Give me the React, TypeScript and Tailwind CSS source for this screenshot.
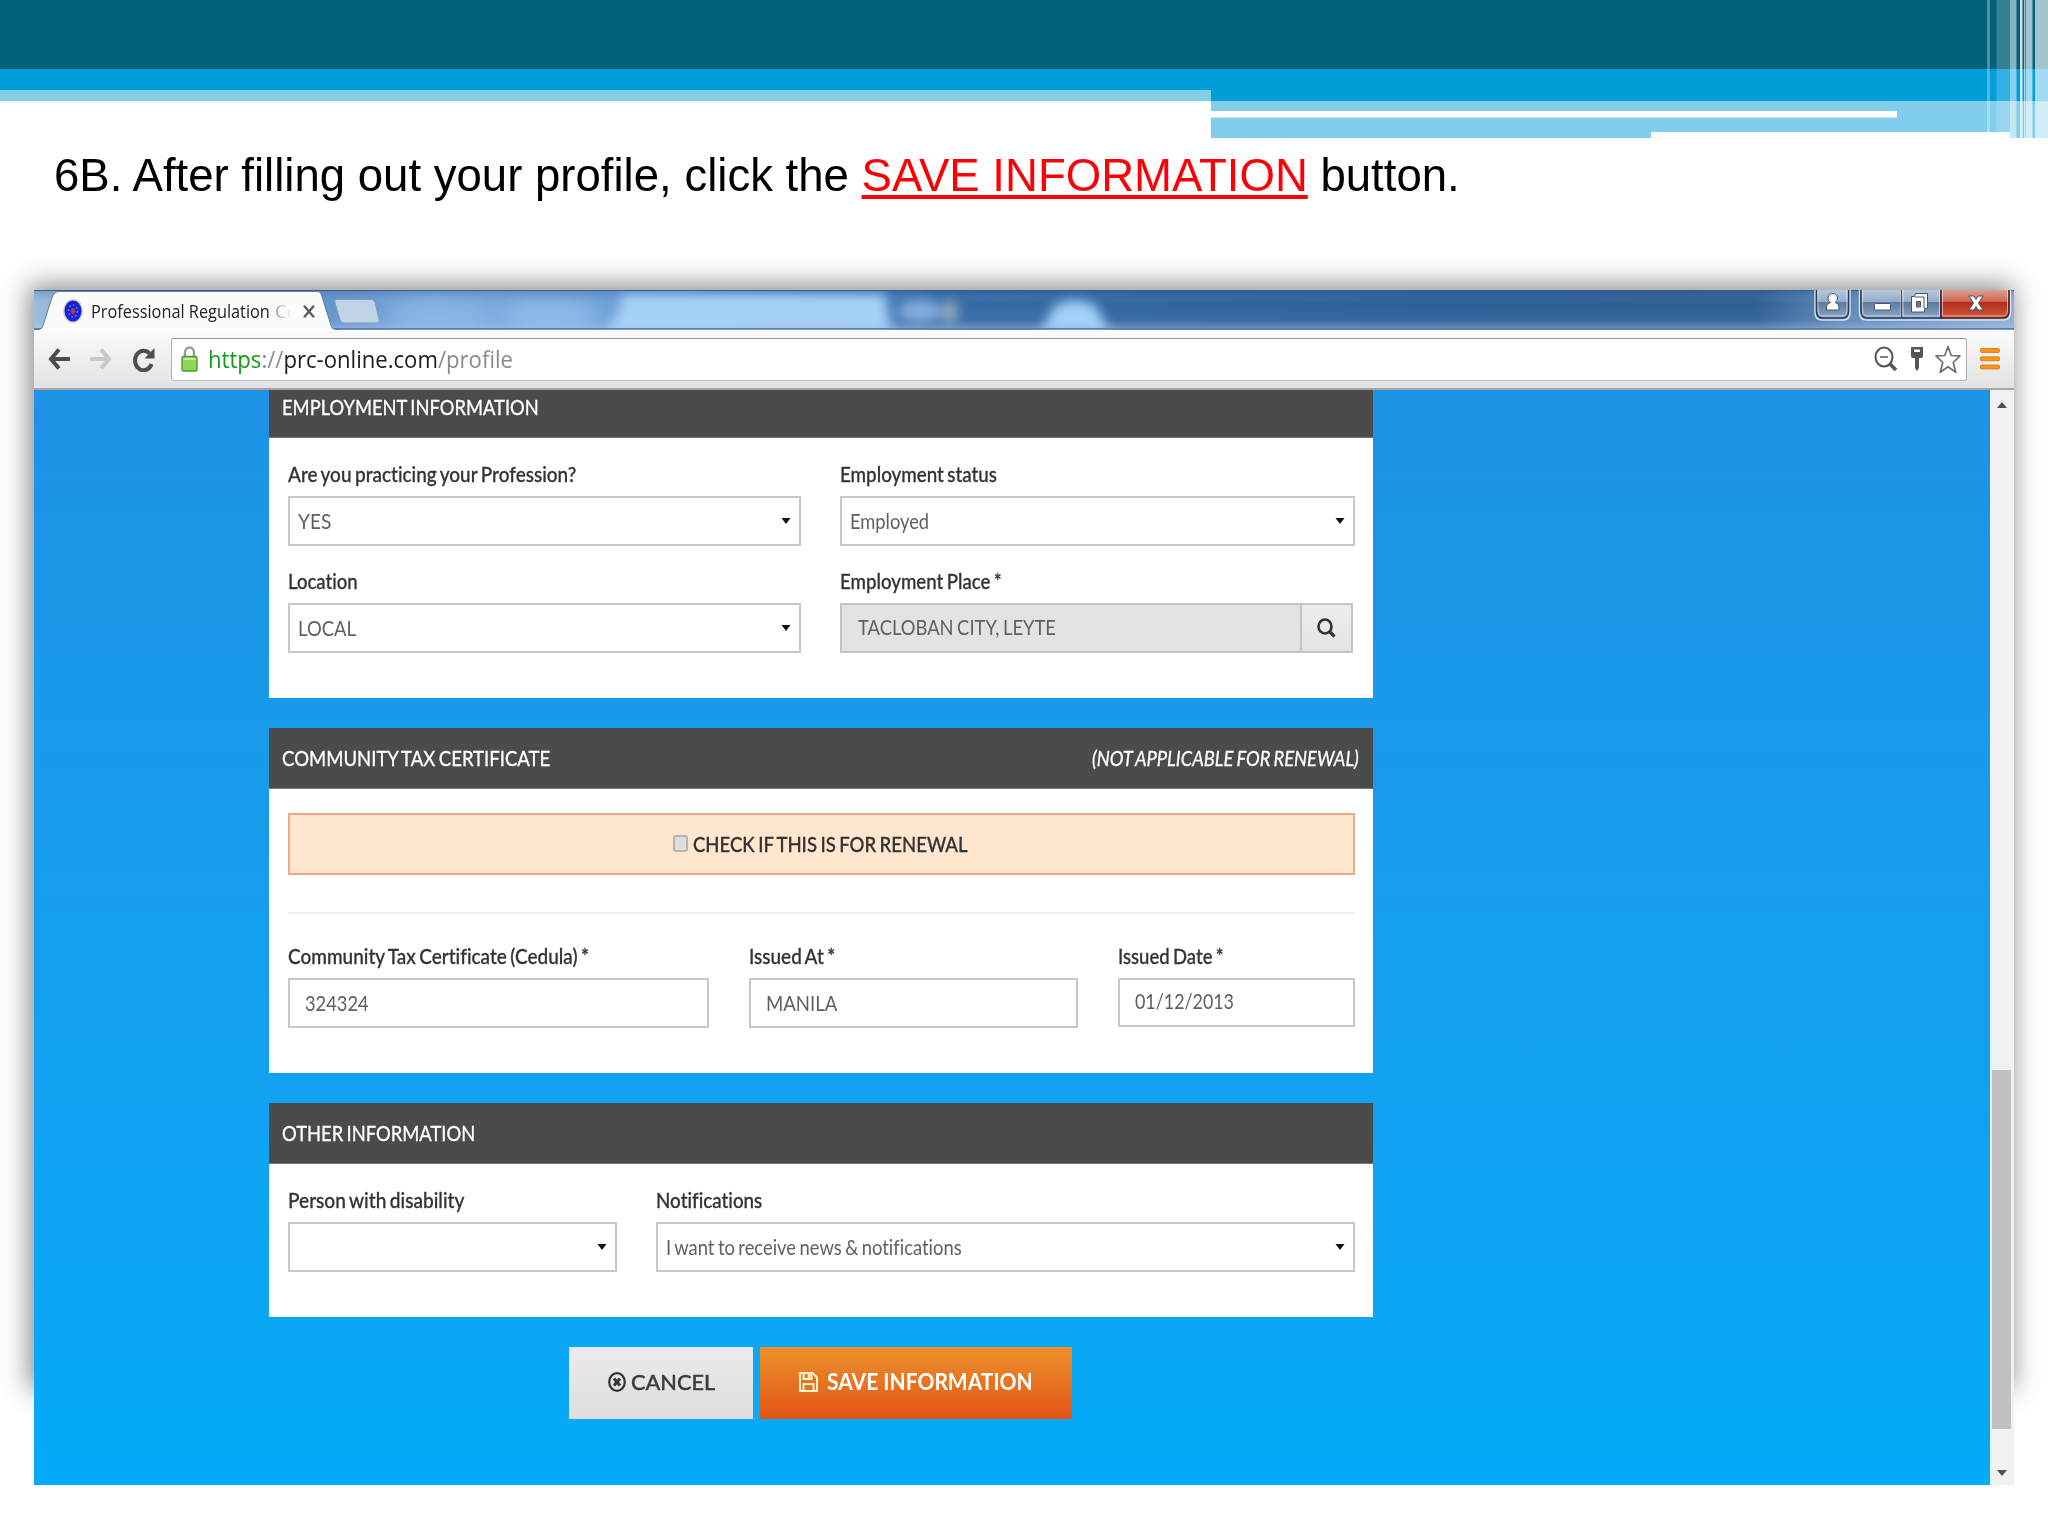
import React, { useLayoutEffect, useRef, useState } from 'react'

// Squeezes a line of text horizontally so that it fills exactly `width` pixels
function Fit({
  width,
  className = '',
  children,
}: {
  width: number
  className?: string
  children: React.ReactNode
}) {
  const ref = useRef<HTMLSpanElement>(null)
  const [scale, setScale] = useState(1)

  useLayoutEffect(() => {
    if (ref.current) setScale(width / ref.current.offsetWidth)
  }, [width])

  return (
    <span className={`block shrink-0 ${className}`} style={{ width }}>
      <span
        ref={ref}
        className="inline-block origin-left whitespace-nowrap"
        style={{ transform: `scaleX(${scale})` }}
      >
        {children}
      </span>
    </span>
  )
}

function Caret() {
  return (
    <svg width="10" height="6" viewBox="0 0 10 6" className="shrink-0">
      <path d="M.5 0h9L5 6z" fill="#111" />
    </svg>
  )
}

function Label({ text, width }: { text: string; width: number }) {
  return (
    <label className="mb-[10px] block text-[22px] leading-6 font-medium text-[#333] [-webkit-text-stroke:0.3px_#333]">
      <Fit width={width}>{text}</Fit>
    </label>
  )
}

function SelectField(props: {
  label: string
  labelWidth: number
  value?: string
  valueWidth?: number
  className: string
}) {
  return (
    <div className={props.className}>
      <Label text={props.label} width={props.labelWidth} />
      <div className="flex h-[50px] items-center justify-between border-2 border-[#c8c8ca] bg-white pr-2 pl-[8px] text-[22px] leading-6 text-[#606060]">
        {props.value ? <Fit width={props.valueWidth || 0}>{props.value}</Fit> : <span />}
        <Caret />
      </div>
    </div>
  )
}

function TextField(props: {
  label: string
  labelWidth: number
  value: string
  valueWidth: number
  className: string
  boxClassName?: string
}) {
  return (
    <div className={props.className}>
      <Label text={props.label} width={props.labelWidth} />
      <div
        className={`flex items-center border-2 border-[#c8c8ca] bg-white pl-[15px] text-[22px] leading-6 text-[#606060] ${props.boxClassName || 'h-[50px] pb-px'}`}
      >
        <Fit width={props.valueWidth}>{props.value}</Fit>
      </div>
    </div>
  )
}

function Card({
  title,
  titleWidth,
  note,
  children,
}: {
  title: string
  titleWidth: number
  note?: string
  children: React.ReactNode
}) {
  return (
    <section className="w-[1104px] bg-white">
      <div className="flex h-[61px] items-center justify-between border-b border-[#777] bg-[#4c4b4c] pr-[14px] pb-px pl-[13px] text-[22px] leading-6 text-white [-webkit-text-stroke:0.3px_#fff]">
        <Fit width={titleWidth}>{title}</Fit>
        {note && (
          <Fit width={267} className="italic">
            {note}
          </Fit>
        )}
      </div>
      <div className="pr-[18px] pl-[19px] pt-6 pb-[45px]">{children}</div>
    </section>
  )
}

function SlideHeader() {
  return (
    <svg width="2048" height="138" viewBox="0 0 2048 138" className="block">
      <rect width="2048" height="69" fill="#04617b" />
      <rect y="69" width="2048" height="32" fill="#009ddb" />
      <rect y="90" width="1211" height="11" fill="#84cfe7" />
      <rect x="1211" y="101" width="837" height="37" fill="#80cded" />
      <rect x="1211" y="111" width="686" height="6.5" fill="#fff" />
      <rect x="1651" y="132" width="359" height="6" fill="#fff" />
      <g fill="#fff">
        <rect x="1987" width="3" height="132" opacity=".3" />
        <rect x="1996.5" width="13.5" height="132" opacity=".2" />
        <rect x="2010" width="6.5" height="138" opacity=".52" />
        <rect x="2020" width="2.5" height="138" opacity=".8" />
        <rect x="2024" width="1.5" height="138" opacity=".6" />
        <rect x="2026" width="6.5" height="138" opacity=".63" />
        <rect x="2035" width="13" height="138" opacity=".63" />
      </g>
    </svg>
  )
}

function TitleBarGlass() {
  return (
    <svg
      width="1980"
      height="40"
      viewBox="34 0 1980 40"
      className="absolute inset-0"
      preserveAspectRatio="none"
    >
      <defs>
        <linearGradient id="glass" x1="0" x2="1" y1="0" y2="0">
          <stop offset="0" stopColor="#9dbbd9" />
          <stop offset=".13" stopColor="#5f8ec8" />
          <stop offset=".2" stopColor="#77a5da" />
          <stop offset=".29" stopColor="#6c9fd6" />
          <stop offset=".43" stopColor="#4379b3" />
          <stop offset=".46" stopColor="#356ba5" />
          <stop offset=".7" stopColor="#2d6097" />
          <stop offset=".87" stopColor="#2f6094" />
          <stop offset=".91" stopColor="#5d87b6" />
          <stop offset="1" stopColor="#8fb0d6" />
        </linearGradient>
        <linearGradient id="sheen" x1="0" x2="0" y1="0" y2="1">
          <stop offset="0" stopColor="#1e4f94" stopOpacity=".3" />
          <stop offset=".35" stopColor="#7aa8dc" stopOpacity="0" />
          <stop offset=".75" stopColor="#a4c4ea" stopOpacity=".08" />
          <stop offset="1" stopColor="#b4cdec" stopOpacity=".5" />
        </linearGradient>
        <filter id="soft" x="-20%" y="-50%" width="140%" height="200%">
          <feGaussianBlur stdDeviation="6" />
        </filter>
        <filter id="softer" x="-20%" y="-50%" width="140%" height="200%">
          <feGaussianBlur stdDeviation="10" />
        </filter>
      </defs>
      <rect x="34" width="1980" height="40" fill="url(#glass)" />
      <g filter="url(#softer)">
        <ellipse cx="440" cy="26" rx="55" ry="16" fill="#8ab6e6" />
        <ellipse cx="550" cy="26" rx="50" ry="16" fill="#8ebbea" />
      </g>
      <g filter="url(#soft)">
        <path d="M605 44l16-28V2h263l8 42z" fill="#a6d1f7" />
        <ellipse cx="920" cy="21" rx="22" ry="11" fill="#86aede" />
        <ellipse cx="950" cy="22" rx="8" ry="12" fill="#93aabb" />
        <path d="M1040 44l14-28q22-12 42 0l14 28z" fill="#a2d2fa" />
      </g>
      <rect x="34" width="1980" height="40" fill="url(#sheen)" />
      <rect x="34" width="1980" height="1" fill="#38608f" />
      <rect x="34" y="38" width="1980" height="1.5" fill="#5d7ba8" />
    </svg>
  )
}

function WindowButtons() {
  return (
    <svg width="200" height="34" viewBox="1814 290 200 34" className="relative">
      <defs>
        <linearGradient id="btn" x1="0" x2="0" y1="0" y2="1">
          <stop offset="0" stopColor="#b8cbdf" />
          <stop offset=".45" stopColor="#94aac6" />
          <stop offset=".46" stopColor="#5d7a9f" />
          <stop offset="1" stopColor="#8ba5c6" />
        </linearGradient>
        <linearGradient id="btnClose" x1="0" x2="0" y1="0" y2="1">
          <stop offset="0" stopColor="#dfa395" />
          <stop offset=".44" stopColor="#cd6450" />
          <stop offset=".45" stopColor="#b02c17" />
          <stop offset="1" stopColor="#d0593c" />
        </linearGradient>
      </defs>
      <path d="M1815 288v24q0 8 7 8h21q7 0 7-8v-24z" fill="none" stroke="#d5e2f0" strokeWidth="1.5" />
      <path d="M1816.500 289v22q0 7 6 7h20q6 0 6-7v-22z" fill="url(#btn)" stroke="#2a3d5a" strokeWidth="1.500" />
      <path d="M1859.500 288v24q0 8 7 8h137q7 0 7-8v-24z" fill="none" stroke="#d5e2f0" strokeWidth="1.5" />
      <path d="M1861 289v22q0 7 6 7h74v-29z" fill="url(#btn)" stroke="#2a3d5a" strokeWidth="1.500" />
      <path d="M1941 289v29h62q6 0 6-7v-22z" fill="url(#btnClose)" stroke="#4a1f20" strokeWidth="1.500" />
      <path d="M1818 290v20q0 6 5 6h19q5 0 5-6v-20M1862.500 290v20q0 6 5 6h33.500v-26M1903 290v26h36.500v-26M1942.500 290v26h60q5 0 5-6v-20" fill="none" stroke="#fff" strokeOpacity=".55" />
      <path d="M1901.500 290v27" stroke="#3a4f6c" />
      <g fill="#fff" stroke="#49536b" strokeWidth="1">
        <path d="M1826.500 310v-3q0-4 4-4.500a4.800 4.800 0 1 1 4.500 0q4 .5 4 4.500v3z" />
        <rect x="1874.500" y="303.500" width="16" height="6.500" rx="1" />
        <path fillRule="evenodd" d="M1915.500 293.500h12v15h-3v3.500h-13v-15.500h3zM1916.500 301.500v5.500h4v-5.500z" />
        <path d="M1915 297h9v11" fill="none" />
        <path d="M1969 296h5l2 3.500 2-3.500h5l-4.500 7 4.500 7h-5l-2-3.500-2 3.500h-5l4.500-7z" />
      </g>
    </svg>
  )
}

function TabStrip() {
  return (
    <div className="relative flex h-10 justify-between overflow-hidden">
      <TitleBarGlass />
      <div className="relative flex">
        <div className="relative h-10 w-[300px]">
          <svg width="306" height="40" viewBox="34 290 306 40" className="absolute top-0 left-0">
            <path
              d="M34 331v-1.500h5q3 0 4-4l9-28q2-6 6-6h260q3 0 4 5l9 29q1 4 5 4h4v1.500z"
              fill="#fbfbfc"
              stroke="#5f7ea8"
              strokeWidth="1"
            />
            <path d="M34 330h306v2H34z" fill="#fbfbfc" />
          </svg>
          <div className="relative flex h-10 items-center pt-[2px] pl-[29px] font-['Open_Sans',sans-serif] text-[18.5px] leading-6 text-[#222]">
            <svg width="20" height="24" viewBox="0 0 20 24" className="mr-2">
              <ellipse cx="10" cy="12" rx="10" ry="12" fill="#d5d2c0" />
              <ellipse cx="10" cy="12" rx="8.500" ry="10.500" fill="#1720dc" />
              <ellipse cx="10" cy="12" rx="4.500" ry="6" fill="none" stroke="#4f78ff" strokeWidth="1.500" strokeDasharray="2 2" />
              <ellipse cx="10" cy="12" rx="2.200" ry="3" fill="#c0392b" />
            </svg>
            <Fit width={179}>Professional Regulation</Fit>
            <span className="ml-[5px] shrink-0 bg-linear-to-r from-[#999] to-white to-75% bg-clip-text whitespace-nowrap text-transparent">
              Co
            </span>
            <svg width="12" height="13" viewBox="0 0 12 13" className="ml-[5px] shrink-0">
              <path d="M1 .8l10 11.400M11 .8L1 12.200" stroke="#5c5c5c" strokeWidth="2.400" />
            </svg>
          </div>
        </div>
        <svg width="46" height="25" viewBox="0 0 46 25" className="mt-[9px]">
          <path
            d="M3 .5h34q3 0 4 3l4 17q1 3.500-3 3.500H11q-4 0-5-3L1 3.500q-1-3 2-3z"
            fill="#c1d3e8"
            stroke="#7f9dc2"
          />
        </svg>
      </div>
      <WindowButtons />
    </div>
  )
}

function Toolbar() {
  return (
    <div className="flex h-[60px] items-center border-b-2 border-[#a5a5a5] bg-linear-to-b from-[#fbfbfc] to-[#e2e2e2] pl-[14px] font-['Open_Sans',sans-serif]">
      <svg width="22" height="22" viewBox="0 0 22 22" fill="none" stroke="#4d4d4d" strokeWidth="4">
        <path d="M11 1.500L3 11l8 9.500M3.500 11H22" />
      </svg>
      <svg width="22" height="22" viewBox="0 0 22 22" fill="none" stroke="#c9c9c9" strokeWidth="4" className="ml-5">
        <path d="M11 1.500L19 11l-8 9.500M18.500 11H0" />
      </svg>
      <svg width="23" height="25" viewBox="0 0 23 25" className="ml-5">
        <path d="M17.500 6.500A8.500 9.800 0 1 0 19.500 17" fill="none" stroke="#4d4d4d" strokeWidth="4" />
        <path d="M22.500 1v10.500H12.500z" fill="#4d4d4d" />
      </svg>
      <div className="ml-[16px] flex h-[43px] w-[1796px] items-center rounded-[3px] border border-t-[#999] border-r-[#b0b0b0] border-b-[#bdbdbd] border-l-[#b0b0b0] bg-white pl-[9px]">
        <svg width="17" height="26" viewBox="0 0 17 26">
          <path d="M4 11V6.500a4.500 5 0 0 1 9 0V11" fill="none" stroke="#9a9a9a" strokeWidth="2.400" />
          <rect x="1" y="10.500" width="15" height="14.500" rx="1.500" fill="#8fd45c" stroke="#4f9a2c" strokeWidth="1.400" />
          <path d="M2.500 13h12" stroke="#c8efa8" strokeWidth="2" />
        </svg>
        <Fit width={305} className="ml-[10px] text-[24px] leading-8 text-[#8a8a8a]">
          <span className="text-[#159a1c]">https</span>://
          <span className="text-[#1c1c1c]">prc-online.com</span>/profile
        </Fit>
        <div className="flex-1" />
        <svg width="24" height="26" viewBox="0 0 24 26" fill="none" stroke="#555" className="mr-[12px]">
          <ellipse cx="10" cy="11" rx="8.500" ry="9.500" strokeWidth="2" />
          <path d="M6 11h8" strokeWidth="1.500" />
          <path d="M15.500 17.500l6.500 6.500" strokeWidth="3.500" />
        </svg>
        <svg width="14" height="24" viewBox="0 0 14 24" className="mr-[11px]">
          <path fillRule="evenodd" d="M1 0h12v9q0 2-2 2H9v10l-2 3-2-3V11H3q-2 0-2-2zM4 2.500v2.500h6V2.500z" fill="#555" />
        </svg>
        <svg width="26" height="29" viewBox="0 0 26 29" className="mr-[5px]">
          <path
            d="M13 1.500l3.200 9 8.800.4-6.800 6.600 2.600 9.700L13 21.800l-7.800 5.400 2.600-9.700L1 10.900l8.800-.4z"
            fill="#fff"
            stroke="#6f6f6f"
            strokeWidth="1.700"
            strokeLinejoin="round"
          />
        </svg>
      </div>
      <svg width="20" height="22" viewBox="0 0 20 22" fill="#f7941d" stroke="#d9760a" strokeWidth=".8" className="ml-[13px]">
        <rect x=".5" y=".5" width="19" height="4" rx="1" />
        <rect x=".5" y="8.800" width="19" height="4" rx="1" />
        <rect x=".5" y="17" width="19" height="4" rx="1" />
      </svg>
    </div>
  )
}

function Scrollbar() {
  return (
    <div className="flex w-6 flex-col items-center bg-[#f0f1f1] pr-px">
      <svg width="10" height="6" viewBox="0 0 10 6" className="mt-[12px] shrink-0">
        <path d="M0 6h10L5 0z" fill="#505050" />
      </svg>
      <div className="mt-[662px] h-[359px] w-[19px] shrink-0 bg-[#c1c1c1]" />
      <svg width="10" height="6" viewBox="0 0 10 6" className="mt-[41px] shrink-0">
        <path d="M0 0h10L5 6z" fill="#505050" />
      </svg>
    </div>
  )
}

function ProfilePage() {
  return (
    <div className="flex h-[1095px] flex-1 flex-col overflow-hidden bg-linear-to-b from-[#1e92e4] to-[#03abf8] pl-[235px] font-[Lato,sans-serif] [font-variant-ligatures:none] [word-spacing:-1.5px]">
      <div className="-mt-[13px] flex flex-col gap-[30px]">
        <Card title="EMPLOYMENT INFORMATION" titleWidth={257}>
          <div className="flex gap-x-[39px]">
            <SelectField className="w-[513px]" label="Are you practicing your Profession?" labelWidth={288} value="YES" valueWidth={33} />
            <SelectField className="w-[515px]" label="Employment status" labelWidth={157} value="Employed" valueWidth={79} />
          </div>
          <div className="mt-[23px] flex gap-x-[39px]">
            <SelectField className="w-[513px]" label="Location" labelWidth={70} value="LOCAL" valueWidth={58} />
            <div className="w-[513px]">
              <Label text="Employment Place *" width={162} />
              <div className="flex h-[50px] border-2 border-[#c4c4c6] bg-[#e3e2e4] text-[22px] leading-6 text-[#606060]">
                <div className="flex flex-1 items-center pb-[2px] pl-[16px]">
                  <Fit width={198}>TACLOBAN CITY, LEYTE</Fit>
                </div>
                <button className="flex w-[51px] items-center justify-center border-l-2 border-[#c4c4c6] bg-linear-to-b from-[#ededed] to-[#e4e4e4]">
                  <svg width="19" height="20" viewBox="0 0 19 20" fill="none" stroke="#333">
                    <ellipse cx="8" cy="8.500" rx="6.500" ry="7" strokeWidth="2.600" />
                    <path d="M12.500 13.500l5 5" strokeWidth="3.200" />
                  </svg>
                </button>
              </div>
            </div>
          </div>
        </Card>

        <Card title="COMMUNITY TAX CERTIFICATE" titleWidth={268} note="(NOT APPLICABLE FOR RENEWAL)">
          <div className="flex h-[62px] items-center justify-center border-2 border-[#efa886] bg-[#fee6cf] pr-[2px] text-[22px] leading-6 font-medium text-[#333] [-webkit-text-stroke:0.3px_#333]">
            <span className="mr-[5px] mb-[2px] h-[17px] w-[15px] rounded-[3px] border-2 border-[#b9b4b1] bg-[#dedede]" />
            <Fit width={275}>CHECK IF THIS IS FOR RENEWAL</Fit>
          </div>
          <hr className="mt-[37px] mb-[30px] border-t-2 border-[#f0f0f0]" />
          <div className="flex gap-x-10">
            <TextField className="w-[421px]" label="Community Tax Certificate (Cedula) *" labelWidth={301} value="324324" valueWidth={64} />
            <TextField className="w-[329px]" label="Issued At *" labelWidth={86} value="MANILA" valueWidth={71} />
            <TextField className="w-[237px]" label="Issued Date *" labelWidth={106} value="01/12/2013" valueWidth={99} boxClassName="h-[49px] pb-[3px]" />
          </div>
        </Card>

        <Card title="OTHER INFORMATION" titleWidth={193}>
          <div className="flex gap-x-[39px]">
            <SelectField className="w-[329px]" label="Person with disability" labelWidth={176} />
            <SelectField className="w-[699px]" label="Notifications" labelWidth={106} value="I want to receive news & notifications" valueWidth={296} />
          </div>
        </Card>
      </div>

      <div className="mt-[30px] flex w-[1104px] gap-[7px] pl-[300px] text-[22px] leading-6">
        <button className="flex h-[72px] w-[184px] items-center bg-linear-to-b from-[#ebebeb] to-[#dedede] pb-[3px] pl-[39px] font-medium text-[#3c3c3c] [-webkit-text-stroke:0.4px_#3c3c3c]">
          <svg width="18" height="20" viewBox="0 0 18 20" fill="none" stroke="#333" className="mr-[5px]">
            <ellipse cx="9" cy="10" rx="7.800" ry="8.800" strokeWidth="2.200" />
            <path d="M6 6.500l6 7M12 6.500l-6 7" strokeWidth="3" />
          </svg>
          <Fit width={84}>CANCEL</Fit>
        </button>
        <button className="flex h-[72px] w-[312px] items-center bg-linear-to-b from-[#ec902c] to-[#e15317] pb-[3px] pl-[39px] font-bold text-white">
          <svg width="19" height="20" viewBox="0 0 19 20" fill="none" stroke="#fff3c8" strokeWidth="2" className="mr-[9px]">
            <path d="M1 1h12.500L18 5.500V19H1z" />
            <path d="M4.500 1v6h8V1M4.500 19v-7h10v7" />
            <path d="M10 2v4" strokeWidth="2.500" />
          </svg>
          <Fit width={206}>SAVE INFORMATION</Fit>
        </button>
      </div>
    </div>
  )
}

export default function App() {
  return (
    <div className="h-[1536px] w-[2048px] overflow-hidden bg-[#fefefe]">
      <SlideHeader />
      <p className="mt-[11px] mb-[89px] pl-[54px] font-['Liberation_Sans',sans-serif] text-[46px] leading-[52px] text-black">
        <Fit width={1406}>
          6B. After filling out your profile, click the{' '}
          <span className="text-[#fb0007] underline decoration-[4px] underline-offset-[4px] [text-decoration-skip-ink:none]">
            SAVE INFORMATION
          </span>{' '}
          button.
        </Fit>
      </p>
      <div className="relative ml-[34px] w-[1980px]">
        {/* drop shadow is shorter than the window itself */}
        <div className="absolute top-0 left-0 h-[1100px] w-[1980px] shadow-[-3px_-3px_24px_2px_rgba(0,0,0,0.45)]" />
        <div className="relative">
          <TabStrip />
          <Toolbar />
          <div className="flex h-[1095px]">
            <ProfilePage />
            <Scrollbar />
          </div>
        </div>
      </div>
    </div>
  )
}
